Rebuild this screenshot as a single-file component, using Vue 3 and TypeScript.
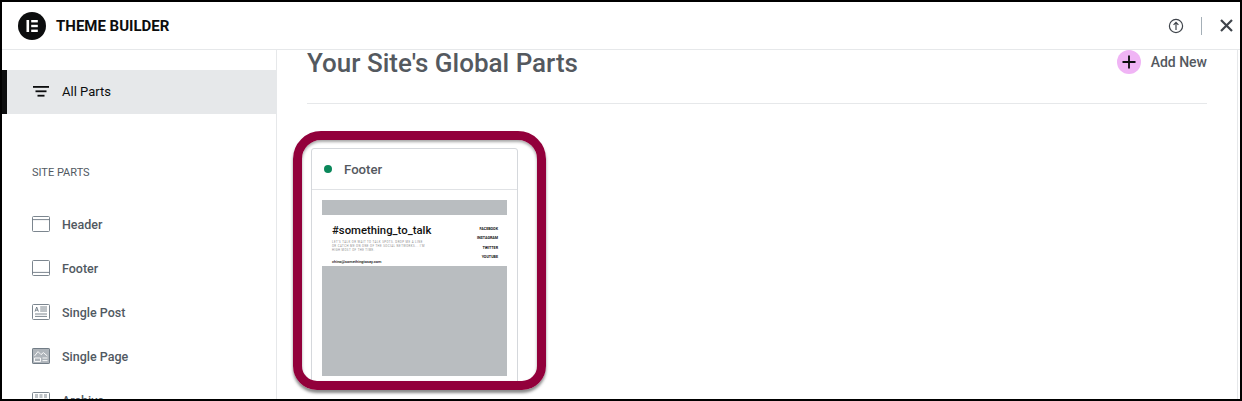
<script setup lang="ts">
const items = ['Header', 'Footer', 'Single Post', 'Single Page', 'Archive']
const socials = ['FACEBOOK', 'INSTAGRAM', 'TWITTER', 'YOUTUBE']
const copy = [
  "LET'S TALK OR WAIT TO TALK SPOTS. DROP ME A LINE",
  "OR CATCH ME ON ONE OF THE SOCIAL NETWORKS... I'M",
  'HIGH MOST OF THE TIME.',
]
</script>

<template>
  <div class="frame">
    <header class="topbar">
      <div class="brand">
        <svg class="logo" width="28" height="28" viewBox="0 0 28 28">
          <circle cx="14" cy="14" r="14" fill="#0c0d0e" />
          <rect x="8.5" y="8" width="2.6" height="12" fill="#fff" />
          <rect x="13.2" y="8" width="6.6" height="2.4" fill="#fff" />
          <rect x="13.2" y="12.8" width="6.6" height="2.4" fill="#fff" />
          <rect x="13.2" y="17.6" width="6.6" height="2.4" fill="#fff" />
        </svg>
        <span class="brand-name">THEME BUILDER</span>
      </div>
      <div class="actions">
        <svg width="16" height="16" viewBox="0 0 16 16" fill="none" stroke="#3f444b" stroke-width="1.2">
          <circle cx="8" cy="8" r="6.6" />
          <path d="M8 12V4.6M5.6 6.8 8 4.4l2.4 2.4" />
        </svg>
        <span class="sep"></span>
        <svg width="13" height="13" viewBox="0 0 13 13" fill="none" stroke="#3f444b" stroke-width="2.2">
          <path d="M1 1 12 12M12 1 1 12" />
        </svg>
      </div>
    </header>

    <div class="body">
      <aside class="sidebar">
        <div class="active">
          <svg width="16" height="11" viewBox="0 0 16 11" fill="#0c0d0e">
            <rect x="0" y="0" width="16" height="1.8" />
            <rect x="2.5" y="4.4" width="11" height="1.8" />
            <rect x="4.5" y="8.8" width="7" height="1.8" />
          </svg>
          <span>All Parts</span>
        </div>
        <div class="section-title">SITE PARTS</div>
        <ul class="list">
          <li v-for="(item, i) in items" :key="item">
            <svg width="18" height="16" viewBox="0 0 18 16" fill="none" stroke="#6d7882" stroke-width="0.9">
              <rect x="0.5" y="0.5" width="17" height="15" rx="1" />
              <path v-if="i === 0" d="M0.5 3.6h17" />
              <path v-if="i === 1" d="M0.5 12.4h17" />
              <g v-if="i === 2">
                <path d="M3 7.6 4.7 3l1.7 4.6M3.6 6.2h2.2M8.2 3h6.8M8.2 5h6.8M8.2 7h6.8M3 10h12M3 12.4h12" />
              </g>
              <g v-if="i === 3">
                <rect x="0.5" y="0.5" width="17" height="15" rx="1" fill="#aeb4ba" />
                <path stroke="#fff" d="M2.5 8 6 3.6l3 3 2.4-2 4 3.4M2.5 10h6v3.5h-6zM10.5 10H15.5M10.5 12.6H15.500" />
              </g>
              <g v-if="i === 4">
                <path d="M3 3h3M7.5 3h3M12 3h3M3 5h3M7.5 5h3M12 5h3" />
              </g>
            </svg>
            <span>{{ item }}</span>
          </li>
        </ul>
      </aside>

      <main class="main">
        <div class="title-row">
          <h1>Your Site's Global Parts</h1>
          <div class="add">
            <span class="plus">
              <svg width="14" height="14" viewBox="0 0 14 14" stroke="#0c0d0e" stroke-width="1.8">
                <path d="M7 0.5v13M0.5 7h13" />
              </svg>
            </span>
            <span>Add New</span>
          </div>
        </div>

        <div class="card-wrap">
          <article class="card">
            <div class="card-head">
              <span class="dot"></span>
              <span>Footer</span>
            </div>
            <div class="thumb">
              <div class="band"></div>
              <div class="shot">
                <div class="shot-left">
                  <div class="shot-title">#something_to_talk</div>
                  <p class="shot-copy">
                    <span v-for="line in copy" :key="line">{{ line }}</span>
                  </p>
                  <div class="shot-mail">chino@somethingtosay.com</div>
                </div>
                <div class="shot-right">
                  <span v-for="s in socials" :key="s">{{ s }}</span>
                </div>
              </div>
              <div class="fill"></div>
            </div>
          </article>
          <div class="highlight"></div>
        </div>
      </main>

      <div class="scroll-edge"></div>
    </div>
  </div>
</template>

<style>
html, body {
  margin: 0;
  background: #000;
  overflow: hidden;
}
</style>

<style scoped>
.frame {
  box-sizing: border-box;
  width: 1242px;
  height: 401px;
  border: 2px solid #000;
  background: #fff;
  display: flex;
  flex-direction: column;
  font-family: Roboto, "Liberation Sans", sans-serif;
  overflow: hidden;
}
.topbar {
  flex: none;
  box-sizing: border-box;
  height: 48px;
  border-bottom: 1px solid #e6e8ea;
  display: flex;
  align-items: center;
  justify-content: space-between;
  padding: 0 7px 0 16px;
}
.brand {
  display: flex;
  align-items: center;
  gap: 10px;
}
.brand-name {
  font-size: 15px;
  font-weight: 700;
  color: #0c0d0e;
}
.actions {
  display: flex;
  align-items: center;
}
.sep {
  width: 1px;
  height: 18px;
  margin: 0 18px 0 17px;
  background: #a4afb7;
}
.body {
  flex: 1;
  min-height: 0;
  display: flex;
  overflow: hidden;
}
.sidebar {
  flex: none;
  box-sizing: border-box;
  width: 275px;
  border-right: 1px solid #e6e8ea;
  padding-top: 20px;
}
.active {
  height: 44px;
  box-sizing: border-box;
  background: #e6e8ea;
  border-left: 5px solid #0c0d0e;
  display: flex;
  align-items: center;
  gap: 13px;
  padding: 0 0 1px 26px;
  font-size: 13px;
  color: #0c0d0e;
}
.section-title {
  margin: 52px 0 0 30px;
  font-size: 11px;
  line-height: 14px;
  color: #515962;
}
.list {
  list-style: none;
  margin: 22px 0 0;
  padding: 0 0 0 30px;
}
.list li {
  height: 44px;
  display: flex;
  align-items: center;
  gap: 12px;
  font-size: 12.5px;
  font-weight: 500;
  color: #515962;
}
.main {
  flex: 1;
  min-width: 0;
  box-sizing: border-box;
  padding: 0 30px;
}
.title-row {
  height: 53px;
  border-bottom: 1px solid #e6e8ea;
  display: flex;
  align-items: flex-start;
  justify-content: space-between;
}
h1 {
  margin: 0;
  font-size: 26px;
  line-height: 27px;
  font-weight: 500;
  color: #54595f;
}
.add {
  display: flex;
  align-items: center;
  gap: 10px;
  font-size: 14px;
  font-weight: 500;
  color: #54595f;
}
.plus {
  width: 24px;
  height: 24px;
  border-radius: 50%;
  background: #f0b4f5;
  display: flex;
  align-items: center;
  justify-content: center;
}
.card-wrap {
  position: relative;
  margin: 44px 0 0 4px;
  width: 207px;
}
.card {
  box-sizing: border-box;
  width: 207px;
  min-height: 240px;
  border: 1px solid #d5d8dc;
  border-radius: 3px;
  background: #fff;
}
.card-head {
  height: 40px;
  border-bottom: 1px solid #e0e2e5;
  display: flex;
  align-items: center;
  gap: 12px;
  padding-left: 12px;
  font-size: 13.2px;
  font-weight: 500;
  color: #54595f;
}
.dot {
  width: 8px;
  height: 8px;
  border-radius: 50%;
  background: #0a875a;
}
.thumb {
  padding: 10px 10px 0;
}
.band {
  height: 15px;
  background: #b9bdc0;
}
.shot {
  height: 51px;
  box-sizing: border-box;
  padding: 9px 9px 0 10px;
  display: flex;
  justify-content: space-between;
  color: #111;
}
.shot-left {
  width: 100px;
}
.shot-title {
  font-size: 11.3px;
  line-height: 13px;
  font-weight: 500;
  white-space: nowrap;
}
.shot-copy {
  margin: 3px 0 0;
  font-size: 2.8px;
  line-height: 4px;
  letter-spacing: 0.45px;
  color: #8a8a8a;
  white-space: nowrap;
}
.shot-copy span {
  display: block;
}
.shot-mail {
  margin-top: 6.5px;
  font-size: 3.9px;
  line-height: 5px;
  font-weight: 500;
}
.shot-right {
  display: flex;
  flex-direction: column;
  align-items: flex-end;
  gap: 4.67px;
  font-size: 3.7px;
  line-height: 5px;
  font-weight: 700;
  padding-top: 2.5px;
}
.fill {
  height: 110px;
  background: #b9bdc0;
}
.highlight {
  position: absolute;
  left: -18px;
  top: -17px;
  width: 253px;
  height: 259px;
  box-sizing: border-box;
  border: 9.5px solid #92003b;
  border-radius: 28px 28px 24px 24px;
  box-shadow: 0 3px 3px rgba(60, 60, 60, 0.6), inset 0 2px 3px rgba(0, 0, 0, 0.35);
  pointer-events: none;
}
.scroll-edge {
  flex: none;
  width: 1px;
  margin-right: 2px;
  background: #e6e8ea;
}
</style>
